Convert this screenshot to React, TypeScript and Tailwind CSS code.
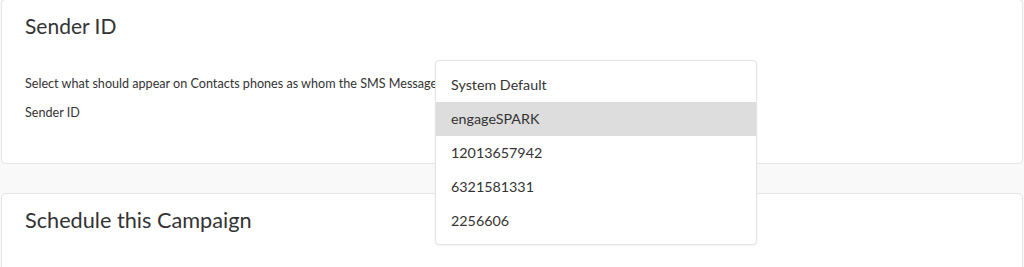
import React from "react";

export default function App() {
  const items = ["System Default", "engageSPARK", "12013657942", "6321581331", "2256606"];
  return (
    <div className="relative w-[1024px] h-[267px] overflow-hidden bg-[#f9f9f9] text-[#333333] font-['Lato',sans-serif]">
      <div className="flex flex-col px-[1px]">
        <div className="-mt-[1px] h-[165px] rounded-[4px] border border-[#e6e6e6] bg-white px-[23px]">
          <h2 className="pt-[10px] text-[21px] leading-[32px] font-normal">Sender ID</h2>
          <p className="mt-[33px] w-[410px] overflow-hidden whitespace-nowrap text-[12.6px] leading-[18px]">
            Select what should appear on Contacts phones as whom the SMS Message is from
          </p>
          <p className="mt-[11px] text-[12.6px] leading-[18px]">Sender ID</p>
        </div>
        <div className="mt-[29px] h-[100px] rounded-[4px] border border-[#e6e6e6] bg-white px-[23px]">
          <h2 className="pt-[10px] text-[21.7px] leading-[32px] font-normal">Schedule this Campaign</h2>
        </div>
      </div>
      <div className="absolute left-[435px] top-[60px] w-[322px] h-[185px] rounded-[4px] border border-[#e3e3e3] bg-white py-[7px] shadow-[0_1px_3px_rgba(0,0,0,0.05)]">
        {items.map((it, i) => (
          <div
            key={it}
            className={`h-[34px] flex items-center px-[15px] text-[14.3px] ${i === 1 ? "bg-[#dddddd]" : ""}`}
          >
            {it}
          </div>
        ))}
      </div>
    </div>
  );
}
